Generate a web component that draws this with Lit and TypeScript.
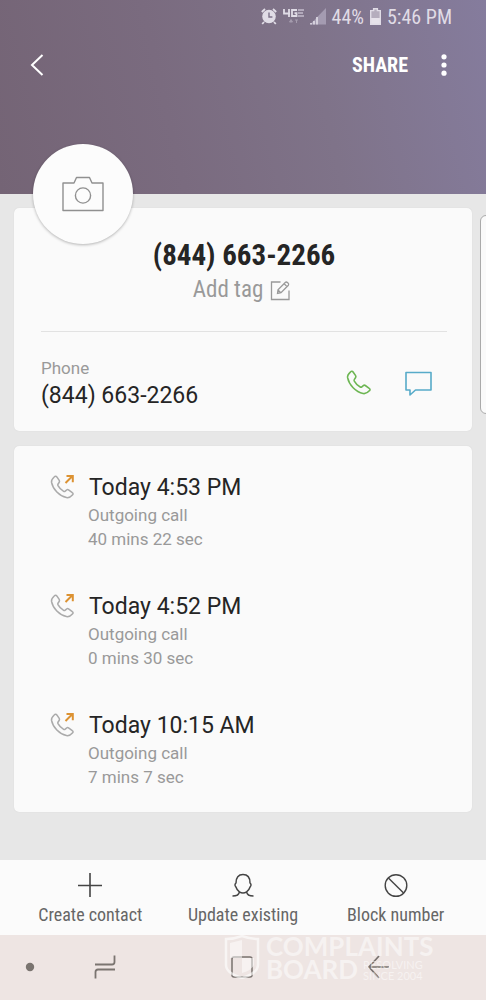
import { LitElement, html, css, svg } from "lit";
import { customElement, property } from "lit/decorators.js";

const handset = svg`<path d="M4.6 1.8 C5.4 1 6.5 1.2 7.1 2 L9.6 5.6 C10.1 6.4 10 7.1 9.5 7.8 L8.4 9.4 C8 10 8 10.5 8.3 11.1 C9.8 13.8 11.6 15.6 14.2 17 C14.8 17.3 15.4 17.2 15.9 16.8 L17.3 15.6 C17.9 15.1 18.6 15 19.3 15.5 L23.2 18.4 C24.1 19 24.3 19.9 23.6 20.6 C21.7 22.8 19.7 24 17.1 23.5 C9.8 22 3 15 1.6 7.7 C1.2 5.3 2.6 3.6 4.6 1.8 Z"/>`;

@customElement("call-entry")
export class CallEntry extends LitElement {
  @property() when = "";
  @property() duration = "";

  static styles = css`
    :host { display: block; }
    .row { display: grid; grid-template-columns: 26px 1fr; column-gap: 12px; }
    .icon { width: 26px; height: 26px; fill: none; }
    .hand { stroke: #aaa; stroke-width: 1.6; }
    .arrow { stroke: #dc9232; stroke-width: 2; }
    .when { margin: 0; font-size: 23px; line-height: 28px; font-weight: 400; color: #252525; padding-left: 1px; }
    .sub { margin: 0; font-size: 17px; line-height: 24px; color: #999; }
    .first { margin-top: 1px; }
  `;

  render() {
    return html`
      <article class="row">
        <svg class="icon" viewBox="0 0 26 26" aria-hidden="true">
          <g class="hand" transform="translate(0 1) scale(.96)">${handset}</g>
          <path class="arrow" d="M15.5 9 L22.5 2 M16.5 2 H22.8 V8.2"/>
        </svg>
        <div>
          <h2 class="when">${this.when}</h2>
          <p class="sub first">Outgoing call</p>
          <p class="sub">${this.duration}</p>
        </div>
      </article>`;
  }
}

@customElement("app-root")
export class AppRoot extends LitElement {
  static styles = css`
    :host {
      display: flex;
      flex-direction: column;
      min-height: 100vh;
      position: relative;
      overflow: hidden;
      background: #e7e7e7;
      font-family: Roboto, "Liberation Sans", sans-serif;
      color: #252525;
    }
    * { box-sizing: border-box; }
    svg { display: block; fill: none; }
    button { font: inherit; color: inherit; background: none; border: 0; padding: 0; cursor: pointer; }
    .narrow { font-family: "Roboto Condensed", Roboto, "Liberation Sans", sans-serif; }

    .hero {
      height: 194px;
      background: linear-gradient(77deg, #746475 0%, #7a6b7f 35%, #7f7389 65%, #857c9d 100%);
      color: #fff;
    }
    .status {
      display: flex; align-items: center; justify-content: flex-end; gap: 6px;
      height: 33px; padding-right: 34px; font-size: 20px; color: #e0dce6;
    }
    .toolbar { display: flex; align-items: center; height: 64px; padding: 0 34px 0 30px; }
    .back { margin-right: auto; }
    .share { font-size: 20px; font-weight: 700; }
    .more { margin-left: 28px; }

    .content { flex: 1; position: relative; padding: 14px 14px 48px; display: flex; flex-direction: column; gap: 15px; }
    .card { background: #fafafa; border-radius: 5px; box-shadow: 0 0 1px #ccc; }
    .photo {
      position: absolute; left: 33px; top: -50px; width: 100px; height: 100px; border-radius: 50%;
      background: #fcfcfc; display: grid; place-items: center; box-shadow: 0 1px 3px rgba(0,0,0,.28);
    }
    .peek {
      position: absolute; right: -20px; top: 21px; width: 26px; height: 199px;
      background: #fafafa; border: 1px solid #aaa; border-radius: 6px;
    }
    .contact { padding: 28px 25px 21px 27px; }
    .number { margin: 0; text-align: center; font-size: 29px; line-height: 38px; font-weight: 700; }
    .tag { display: flex; align-items: center; justify-content: center; gap: 7px; width: 100%; padding-right: 4px; font-size: 23px; line-height: 32px; color: #999; }
    .phone { display: flex; align-items: center; margin-top: 25px; padding-top: 23px; border-top: 1px solid #e2e2e2; }
    .detail { flex: 1; }
    .label { margin: 0; font-size: 17px; line-height: 26px; color: #999; }
    .value { margin: 0; font-size: 23px; line-height: 29px; }
    .call { margin-right: 33px; }
    .message { margin-right: 15px; }
    .history { padding: 28px 35px 23px 36px; display: flex; flex-direction: column; gap: 42px; }

    .actions { display: grid; grid-template-columns: repeat(3, 1fr); height: 75px; padding: 0 14px; background: #fbfbfb; }
    .action { display: flex; flex-direction: column; align-items: center; gap: 5px; padding-top: 12px; font-size: 18px; line-height: 24px; color: #666; }
    .nav { height: 65px; background: #eee5e3; display: flex; align-items: flex-start; padding: 18px 38px 0 24px; }
    .key { flex: 1; display: flex; justify-content: center; }
    .mark {
      position: absolute; left: 224px; bottom: 19px; display: flex; gap: 6px; color: rgba(255,255,255,.5);
      pointer-events: none; font-family: Lato, sans-serif; font-weight: 700;
    }
    .words { display: flex; flex-direction: column; font-size: 26px; line-height: 23px; }
    .second { display: flex; align-items: center; gap: 5px; }
    .tiny { font-size: 11px; line-height: 11px; font-weight: 400; }
    .tiny span { display: block; }
  `;

  render() {
    return html`
      <header class="hero narrow">
        <div class="status">
          <svg width="16" height="17" viewBox="0 0 16 17" aria-hidden="true">
            <circle cx="8" cy="8.5" r="6.8" fill="#e0dce6"/>
            <path d="M.8 4 L4 1 M15.2 4 L12 1 M3 14 L1.2 16 M13 14 L14.8 16" stroke="#e0dce6" stroke-width="1.8"/>
            <path d="M8 4.5 V9 H11.4" stroke="#7d7289" stroke-width="1.4"/>
          </svg>
          <svg width="21" height="17" viewBox="0 0 21 17" role="img" aria-label="4G LTE">
            <path d="M1 1 V5.5 H7 M6 1 V9 M14 2 H9 V8 H13.5 V5.2 H11.5" stroke="#e0dce6" stroke-width="1.8"/>
            <path d="M15 2 H21 M15 5 H20 M15 8 H21" stroke="#c3bccb" stroke-width="1.4"/>
            <path d="M6.5 14 L8 11.5 L9.5 14 Z M12 12 H15 M13.5 12 V15" fill="#a49bad" stroke="#a49bad"/>
          </svg>
          <svg width="16" height="17" viewBox="0 0 16 17" aria-hidden="true">
            <path d="M0 16.5 L16 0 V16.5 Z" fill="#a49bb1"/>
            <path d="M1 16.5 V15 M4 16.5 V13 M7 16.5 V9" stroke="#e0dce6" stroke-width="1.6"/>
          </svg>
          <span>44%</span>
          <svg width="11" height="17" viewBox="0 0 11 17" aria-hidden="true">
            <path d="M3 0 H8 V2 H11 V17 H0 V2 H3 Z" fill="#b5adbd"/>
            <path d="M1 10 H10 V16 H1 Z" fill="#e6e2ea"/>
            <path d="M.7 17 V2.6 H3.6 V.7 H7.4 V2.6 H10.3 V16.3 H.7" stroke="#e0dce6" stroke-width="1.4"/>
          </svg>
          <span>5:46 PM</span>
        </div>
        <div class="toolbar">
          <button class="back" aria-label="Back">
            <svg width="14" height="22" viewBox="0 0 14 22"><path d="M12.5 1 L2 11 L12.5 21" stroke="#fff" stroke-width="2"/></svg>
          </button>
          <button class="share">SHARE</button>
          <button class="more" aria-label="More options">
            <svg width="16" height="22" viewBox="0 0 16 22"><g fill="#fff"><circle cx="8" cy="2.8" r="2.6"/><circle cx="8" cy="11" r="2.6"/><circle cx="8" cy="19.2" r="2.6"/></g></svg>
          </button>
        </div>
      </header>

      <main class="content">
        <section class="card contact">
          <h1 class="number narrow">(844) 663-2266</h1>
          <button class="tag narrow">Add tag
            <svg width="21" height="21" viewBox="0 0 21 21" stroke="#999" stroke-width="1.3" aria-hidden="true">
              <path d="M10.5 2 H1.5 V19.5 H19 V10.5"/>
              <path d="M7.5 13.5 L8 9.8 L15.5 2.3 C16.5 1.3 19.6 3.8 18.4 5.2 L11 12.7 Z M14.2 3.8 L17 6.6 M8 10 L10.8 12.7"/>
            </svg>
          </button>
          <div class="phone">
            <div class="detail">
              <p class="label">Phone</p>
              <p class="value">(844) 663-2266</p>
            </div>
            <button class="call" aria-label="Call">
              <svg width="26" height="26" viewBox="0 0 26 26" stroke="#6db653" stroke-width="1.6">${handset}</svg>
            </button>
            <button class="message" aria-label="Message">
              <svg width="27" height="26" viewBox="0 0 27 26"><path d="M1 2.5 H26 V20 H10.5 L5 25 V20 H1 Z" stroke="#57abc9" stroke-width="1.6" stroke-linejoin="round"/></svg>
            </button>
          </div>
        </section>
        <section class="card history">
          <call-entry when="Today 4:53 PM" duration="40 mins 22 sec"></call-entry>
          <call-entry when="Today 4:52 PM" duration="0 mins 30 sec"></call-entry>
          <call-entry when="Today 10:15 AM" duration="7 mins 7 sec"></call-entry>
        </section>
        <div class="peek"></div>
        <button class="photo" aria-label="Add photo">
          <svg width="42" height="36" viewBox="0 0 42 36" stroke="#909090" stroke-width="1.4" stroke-linejoin="round">
            <path d="M1 7 H12 L14.5 1.5 H27.5 L30 7 H41 V34.5 H1 Z"/><circle cx="21" cy="19.5" r="7.6"/>
          </svg>
        </button>
      </main>

      <footer class="actions narrow">
        <button class="action">
          <svg width="26" height="26" viewBox="0 0 26 26"><path d="M13 1 V25 M1 13.5 H25" stroke="#444" stroke-width="1.6"/></svg>
          Create contact
        </button>
        <button class="action">
          <svg width="26" height="26" viewBox="0 0 26 26"><path d="M2.5 24 C6 24 9 22.6 9.4 19.8 C7.5 18.4 6.4 16.8 5.8 14.8 C4.6 13.6 4.8 12 6 11 C6 5.5 8.4 2.6 13 2.6 C17.6 2.6 20 5.5 20 11 C21.2 12 21.4 13.6 20.2 14.8 C19.6 16.8 18.5 18.4 16.6 19.8 C17 22.6 20 24 23.5 24 M9.4 19.8 C11.5 21.2 14.5 21.2 16.6 19.8" stroke="#444" stroke-width="1.5"/></svg>
          Update existing
        </button>
        <button class="action">
          <svg width="26" height="26" viewBox="0 0 26 26" stroke="#444" stroke-width="1.4"><circle cx="13" cy="13.5" r="10.8"/><path d="M5.4 5.9 L20.6 21.1"/></svg>
          Block number
        </button>
      </footer>
      <nav class="nav" aria-label="System">
        <button aria-label="Hide bar"><svg width="12" height="28" viewBox="0 0 12 28"><circle cx="6" cy="14" r="4.2" fill="#7a7470"/></svg></button>
        <button class="key" aria-label="Recent apps"><svg width="22" height="28" viewBox="0 0 22 28"><path d="M1 11.5 H18 Q20.5 11.5 20.5 9 V2.5 M21 16.5 H4 Q1.5 16.5 1.5 19 V25.5" stroke="#7a7470" stroke-width="1.8"/></svg></button>
        <button class="key" aria-label="Home"><svg width="24" height="28" viewBox="0 0 24 28"><rect x="2" y="4" width="20" height="20" rx="2" stroke="#78716e" stroke-width="1.5"/></svg></button>
        <button class="key" aria-label="Back"><svg width="24" height="28" viewBox="0 0 24 28"><path d="M12 3 L2 14 L12 25 M2 14 H22" stroke="#78716e" stroke-width="1.7"/></svg></button>
      </nav>
      <div class="mark">
        <svg width="36" height="44" viewBox="0 0 36 44" aria-hidden="true">
          <path d="M2 4 Q10 4 18 1 Q26 4 34 4 V30 Q34 38 18 43 Q2 38 2 30 Z" stroke="rgba(255,255,255,.6)" stroke-width="2.5"/>
          <path d="M6 8 L18 5 V23 H30 V30 Q28 35 18 38 V23 H6 Z" fill="rgba(255,255,255,.5)"/>
        </svg>
        <div class="words">
          <span>COMPLAINTS</span>
          <div class="second"><span>BOARD</span><div class="tiny"><span>RESOLVING</span><span>SINCE 2004</span></div></div>
        </div>
      </div>`;
  }
}
